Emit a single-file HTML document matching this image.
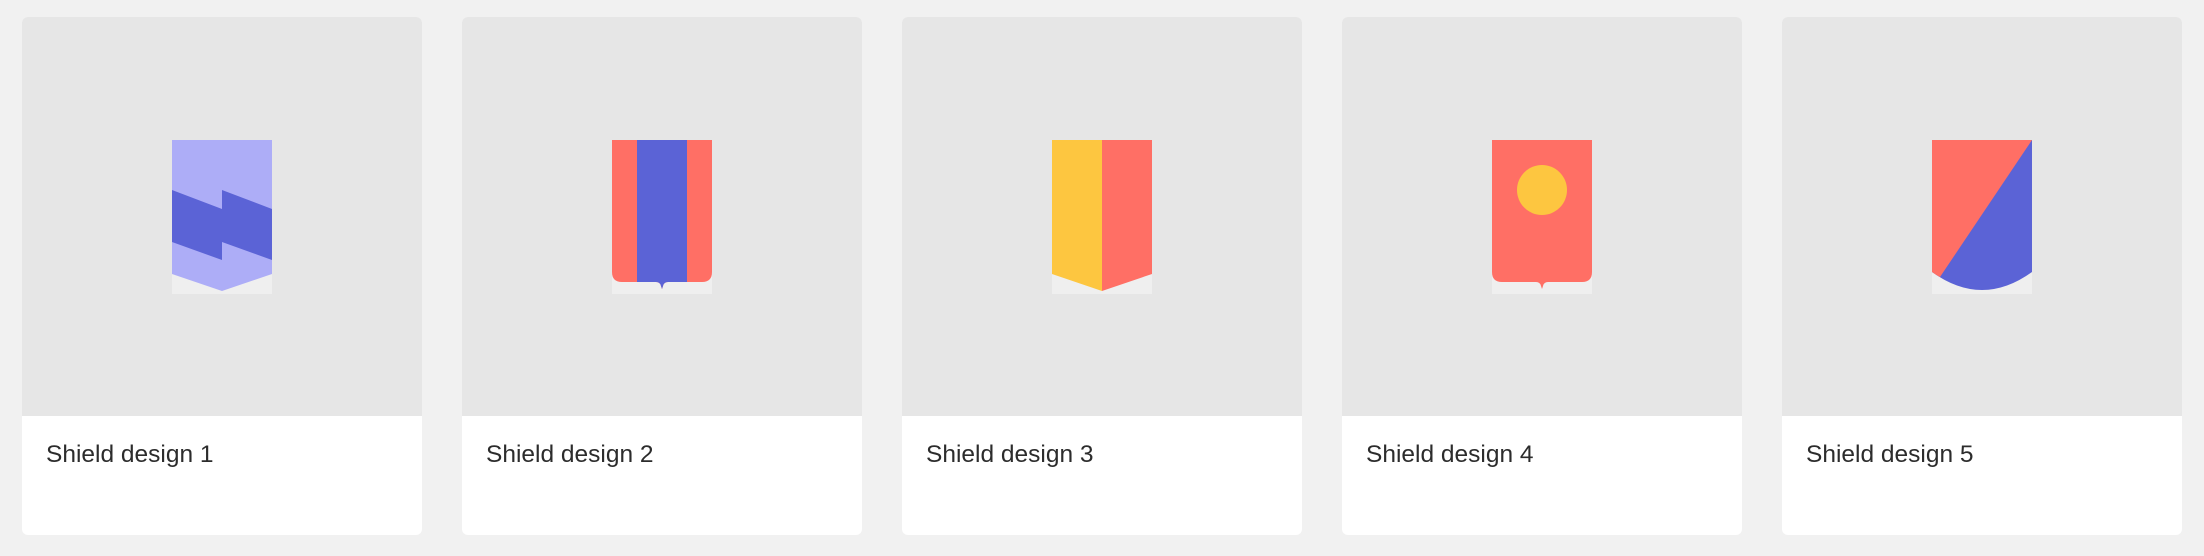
<!DOCTYPE html>
<html><head><meta charset="utf-8"><style>
html,body{margin:0;padding:0;background:#f1f1f1;width:2204px;height:556px;overflow:hidden}
.card{position:absolute;top:17px;width:400px;height:518px;background:#fff;border-radius:6px;overflow:hidden}
.img{position:absolute;left:0;top:0;width:400px;height:399px;background:#e6e6e6}
.img svg{position:absolute;left:150px;top:123px}
.t{position:absolute;left:24px;top:424px;font-family:"Liberation Sans",sans-serif;font-size:24.5px;color:#2c2c2c;white-space:nowrap}
</style></head><body>
<div class="card" style="left:22px"><div class="img"><svg width="100" height="154" viewBox="0 0 100 154">
<rect width="100" height="154" fill="#efefef"/>
<path d="M0 0H100V134L50 151L0 134Z" fill="#adadf7"/>
<path d="M0 50L50 69V50L100 69V120L50 102V120L0 102Z" fill="#5b63d6"/>
</svg></div><div class="t">Shield design 1</div></div>

<div class="card" style="left:462px"><div class="img"><svg width="100" height="154" viewBox="0 0 100 154">
<rect width="100" height="154" fill="#efefef"/>
<path d="M0 0H100V132Q100 142 90 142H56Q52 142 51 146L50 149L49 146Q48 142 44 142H10Q0 142 0 132Z" fill="#ff6f65"/>
<path d="M25 0H75V142H56Q52 142 51 146L50 149L49 146Q48 142 44 142H25Z" fill="#5b63d6"/>
</svg></div><div class="t">Shield design 2</div></div>

<div class="card" style="left:902px"><div class="img"><svg width="100" height="154" viewBox="0 0 100 154">
<rect width="100" height="154" fill="#efefef"/>
<path d="M0 0H50V151L0 134Z" fill="#fdc640"/>
<path d="M50 0H100V134L50 151Z" fill="#ff6f65"/>
</svg></div><div class="t">Shield design 3</div></div>

<div class="card" style="left:1342px"><div class="img"><svg width="100" height="154" viewBox="0 0 100 154">
<rect width="100" height="154" fill="#efefef"/>
<path d="M0 0H100V132Q100 142 90 142H56Q52 142 51 146L50 149L49 146Q48 142 44 142H10Q0 142 0 132Z" fill="#ff6f65"/>
<circle cx="50" cy="50" r="25" fill="#fdc640"/>
</svg></div><div class="t">Shield design 4</div></div>

<div class="card" style="left:1782px"><div class="img"><svg width="100" height="154" viewBox="0 0 100 154">
<rect width="100" height="154" fill="#efefef"/>
<path d="M0 0H100V132Q75 150 50 150Q25 150 0 132Z" fill="#5b63d6"/>
<path d="M0 0H100L8 137Q4 135 0 132Z" fill="#ff6f65"/>
</svg></div><div class="t">Shield design 5</div></div>
</body></html>
